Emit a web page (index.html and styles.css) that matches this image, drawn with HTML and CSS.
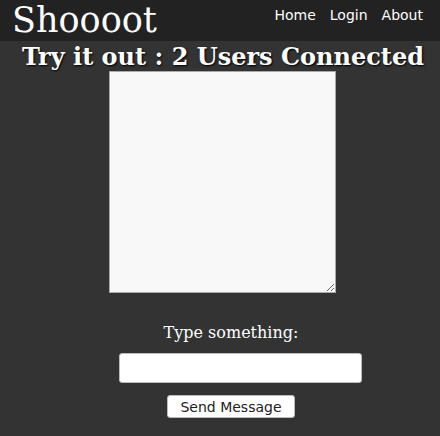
FILE: index.html
```html
<!DOCTYPE html>
<html>
<head>
<meta charset="utf-8">
<link rel="stylesheet" href="styles.css">
</head>
<body>
<header class="topbar">
  <div class="brand">Shoooot</div>
  <nav class="nav">
    <a href="#">Home</a>
    <a href="#">Login</a>
    <a href="#">About</a>
  </nav>
</header>
<main class="main">
  <h1 class="title">Try it out : 2 Users Connected</h1>
  <textarea class="log"></textarea>
  <label class="prompt">Type something:</label>
  <input class="msg" type="text">
  <button class="send">Send Message</button>
</main>
</body>
</html>
```
FILE: styles.css
```css
html, body { margin: 0; padding: 0; }
body {
  background: #333333;
  width: 440px;
  height: 436px;
  overflow: hidden;
}
.topbar {
  background: #222222;
  height: 41px;
  display: flex;
  justify-content: space-between;
  align-items: flex-start;
  padding: 0 17px 0 12px;
}
.brand {
  font-family: "DejaVu Serif", serif;
  font-size: 35px;
  color: #ffffff;
  line-height: 40px;
}
.nav {
  display: flex;
  gap: 14px;
  padding-top: 7px;
}
.nav a {
  font-family: "DejaVu Sans", sans-serif;
  font-size: 14px;
  color: #ffffff;
  text-decoration: none;
}
.main {
  display: flex;
  flex-direction: column;
  align-items: center;
}
.title {
  margin: 2px 0 0 6px;
  font-family: "DejaVu Serif", serif;
  font-weight: bold;
  font-size: 24px;
  line-height: 28px;
  color: #ffffff;
  text-shadow: 1px 1px 2px #000;
}
.log {
  box-sizing: border-box;
  width: 227px;
  height: 222px;
  margin: 0 0 0 5px;
  background: #f8f8f8;
  border: 1px solid #aaaaaa;
  resize: both;
}
.prompt {
  margin: 30px 0 0 22px;
  font-family: "DejaVu Serif", serif;
  font-size: 16px;
  color: #ffffff;
}
.msg {
  box-sizing: border-box;
  margin: 11px 0 0 41px;
  width: 243px;
  height: 30px;
  border: 1px solid #bbb;
  border-radius: 3px;
  background: #fff;
}
.send {
  box-sizing: border-box;
  margin: 12px 0 0 22px;
  width: 128px;
  height: 23px;
  background: #fff;
  border: 1px solid #bbb;
  border-radius: 3px;
  font-family: "DejaVu Sans", sans-serif;
  font-size: 14px;
  color: #222;
  padding: 0;
}
```
